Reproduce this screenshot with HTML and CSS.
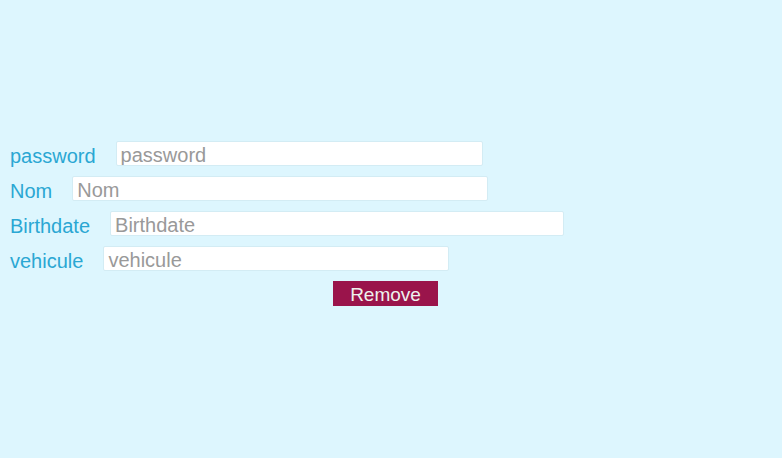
FILE: index.html
```html
<!DOCTYPE html>
<html>
<head>
<meta charset="utf-8">
<link rel="stylesheet" href="styles.css">
</head>
<body>
<form class="form">
  <div class="row">
    <label class="label">password</label>
    <input class="field w-password" type="text" placeholder="password">
  </div>
  <div class="row">
    <label class="label">Nom</label>
    <input class="field w-nom" type="text" placeholder="Nom">
  </div>
  <div class="row">
    <label class="label">Birthdate</label>
    <input class="field w-birth" type="text" placeholder="Birthdate">
  </div>
  <div class="row">
    <label class="label">vehicule</label>
    <input class="field w-vehicule" type="text" placeholder="vehicule">
  </div>
  <div class="actions">
    <button class="remove" type="button">Remove</button>
  </div>
</form>
</body>
</html>
```
FILE: styles.css
```css
html, body {
  margin: 0;
  padding: 0;
  background: #ddf6fe;
  height: 100%;
}
body {
  font-family: "Liberation Sans", Arial, sans-serif;
}
.form {
  padding: 141px 0 0 10px;
  display: flex;
  flex-direction: column;
  gap: 10px;
}
.row {
  display: flex;
  align-items: center;
  gap: 20px;
  height: 25px;
}
.label {
  color: #2aa7d3;
  font-size: 20px;
  line-height: 25px;
  padding-top: 6px;
}
.field {
  box-sizing: border-box;
  height: 25px;
  margin: 0;
  padding: 4px 4px 0;
  border: 1px solid #d3ecf4;
  border-radius: 2px;
  background: #fff;
  font-family: "Liberation Sans", Arial, sans-serif;
  font-size: 20px;
  color: #555;
  outline: none;
}
.field::placeholder {
  color: #999;
}
.w-password { width: 367px; }
.w-nom { width: 416px; }
.w-birth { width: 454px; }
.w-vehicule { width: 346px; }
.actions {
  display: flex;
  padding-left: 323px;
}
.remove {
  width: 105px;
  height: 25px;
  margin: 0;
  padding: 3px 0 0;
  border: none;
  border-radius: 0;
  background: #9a144b;
  color: #eef2ee;
  font-family: "Liberation Sans", Arial, sans-serif;
  font-size: 19px;
  line-height: 22px;
}
```
